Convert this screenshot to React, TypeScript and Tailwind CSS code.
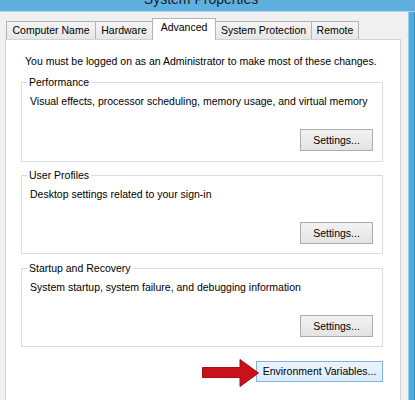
import React from "react";

function Group({
  title,
  desc,
  className,
}: {
  title: string;
  desc: string;
  className: string;
}) {
  return (
    <div className={`border border-[#dcdcdc] ${className}`}>
      <div className="-mt-[8px] ml-[5px] w-fit bg-white px-[2px] leading-[15px]">{title}</div>
      <div className="mt-[4px] pl-[8px] leading-[15px]">{desc}</div>
      <div className="mt-[20px] flex justify-end pr-[9px]">
        <button className="h-[22px] w-[73px] border border-[#acacac] bg-linear-to-b from-[#f2f2f2] to-[#e3e3e3] leading-none text-black">
          Settings...
        </button>
      </div>
    </div>
  );
}

export default function App() {
  return (
    <div className="flex h-[400px] w-[415px] flex-col overflow-hidden bg-[#f0f0f0] font-['Liberation_Sans',Arial,sans-serif] text-[10.5px] text-black">
      <div className="h-[12px] shrink-0 overflow-hidden border-b border-[#a9d4ee] bg-[#60b0df]">
        <div className="-mt-[8px] pr-[13px] text-center text-[14px] leading-[14px] text-[#1b1b1b]">
          System Properties
        </div>
      </div>
      <div className="flex min-h-0 flex-1">
        <div className="flex-1 pl-[5px] pr-[7px] pt-[6px]">
          <div className="flex items-end pl-[1px]">
            <div className="flex h-[18px] w-[90px] items-center justify-center border border-b-0 border-[#b4b4b4] bg-linear-to-b from-[#f4f4f4] to-[#e6e6e6] leading-[13px]">
              Computer Name
            </div>
            <div className="-ml-px flex h-[18px] w-[58px] items-center justify-center border border-b-0 border-[#b4b4b4] bg-linear-to-b from-[#f4f4f4] to-[#e6e6e6] leading-[13px]">
              Hardware
            </div>
            <div className="relative z-10 -mb-px -ml-px flex h-[22px] w-[64px] items-start justify-center border border-b-0 border-[#b4b4b4] bg-white pt-[2px] leading-[13px]">
              Advanced
            </div>
            <div className="-ml-px flex h-[18px] w-[97px] items-center justify-center border border-b-0 border-[#b4b4b4] bg-linear-to-b from-[#f4f4f4] to-[#e6e6e6] leading-[13px]">
              System Protection
            </div>
            <div className="-ml-px flex h-[18px] w-[48px] items-center justify-center border border-b-0 border-[#b4b4b4] bg-linear-to-b from-[#f4f4f4] to-[#e6e6e6] leading-[13px]">
              Remote
            </div>
          </div>
          <div className="h-[400px] border border-[#d2d2d2] bg-white">
            <p className="pl-[19px] pt-[14px] leading-[15px]">
              You must be logged on as an Administrator to make most of these changes.
            </p>
            <div className="ml-[15px] w-[362px]">
              <Group
                title="Performance"
                desc="Visual effects, processor scheduling, memory usage, and virtual memory"
                className="mt-[13px] h-[80px]"
              />
              <Group
                title="User Profiles"
                desc="Desktop settings related to your sign-in"
                className="mt-[13px] h-[79px]"
              />
              <Group
                title="Startup and Recovery"
                desc="System startup, system failure, and debugging information"
                className="mt-[14px] h-[79px]"
              />
              <div className="mt-[12px] flex items-start justify-end">
                <svg
                  width="57"
                  height="28"
                  viewBox="0 0 57 28"
                  className="relative z-10 -mr-[3px] shrink-0"
                >
                  <polygon
                    points="0.5,8.5 38,8.5 38,0.5 56.5,14 38,27.5 38,18.5 0.5,18.5"
                    fill="#c8111b"
                    stroke="#a50d14"
                    strokeWidth="1"
                  />
                </svg>
                <button className="mt-[2px] h-[21px] w-[127px] border border-[#7eb4ea] bg-linear-to-b from-[#ecf4fc] to-[#dcecfc] leading-none text-black">
                  Environment Variables...
                </button>
              </div>
            </div>
          </div>
        </div>
        <div className="flex w-[7px] shrink-0">
          <div className="w-[1px] bg-[#9ccde9]" />
          <div className="w-[5px] bg-[#52abdf]" />
          <div className="w-[1px] bg-[#3a8fc4]" />
        </div>
      </div>
    </div>
  );
}
